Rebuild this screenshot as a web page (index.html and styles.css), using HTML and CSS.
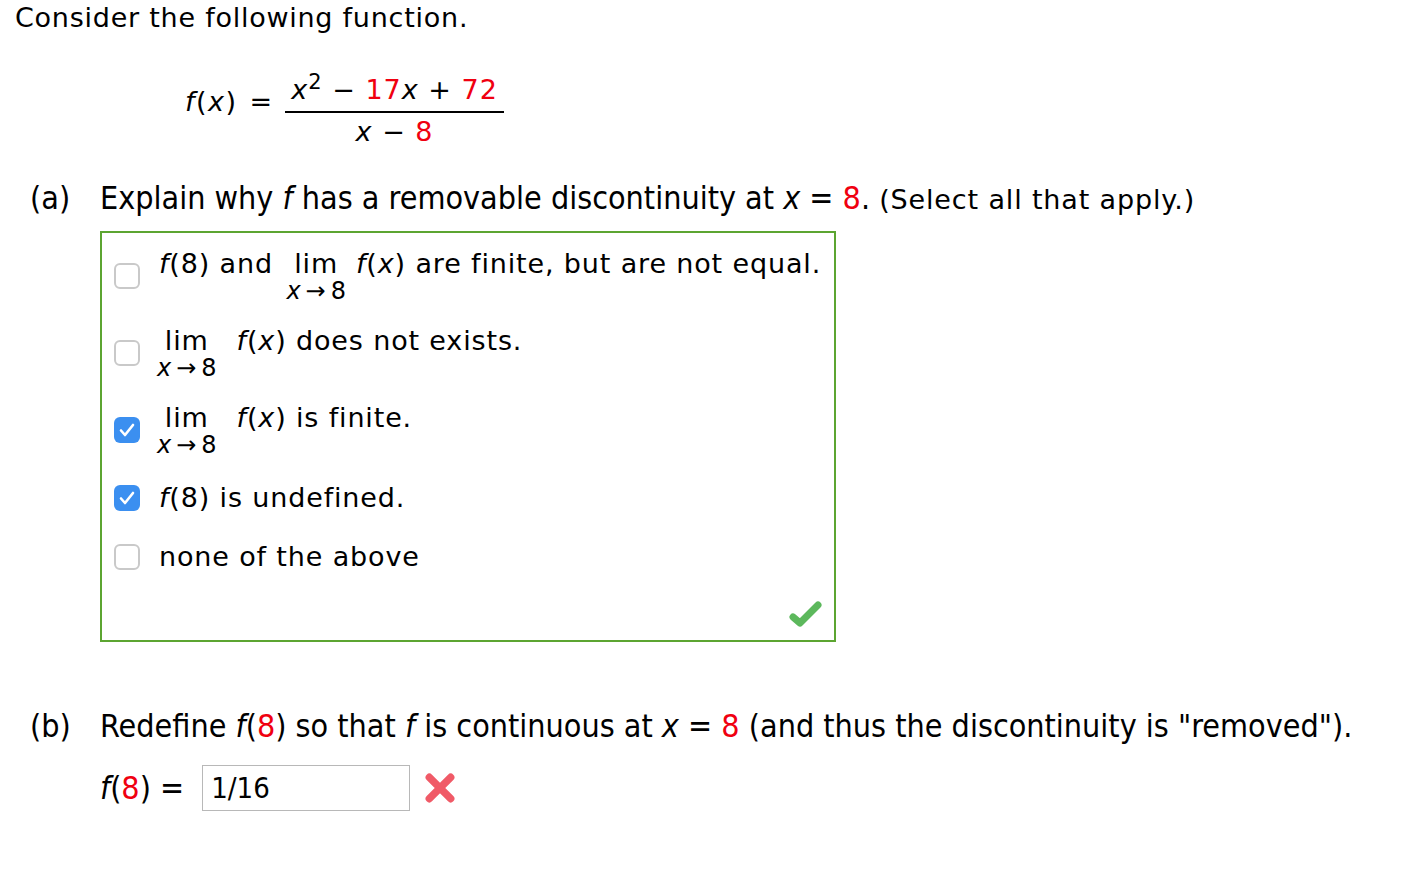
FILE: index.html
```html
<!DOCTYPE html>
<html lang="en">
<head>
    <meta charset="UTF-8">
    <link rel="stylesheet" href="styles.css">
</head>
<body>
    <div class="page">
        <p class="intro">Consider the following function.</p>

        <div class="formula">
            <span class="lhs"><i>f</i>(<i>x</i>)</span>
            <span class="eq">=</span>
            <span class="frac">
                <span class="num"><i>x</i><sup>2</sup> &minus; <span class="red">17</span><i>x</i> + <span class="red">72</span></span>
                <span class="den"><i>x</i> &minus; <span class="red">8</span></span>
            </span>
        </div>

        <div class="part">
            <div class="part-head">
                <span class="label">(a)</span>
                <span class="question">Explain why <i>f</i> has a removable discontinuity at <i>x</i> = <span class="red">8</span>. <span class="wide">(Select all that apply.)</span></span>
            </div>
            <div class="answer-box">
                <div class="option">
                    <span class="cb"></span>
                    <div class="opt-text"><i>f</i>(8) and <span class="lim"><span>lim</span><span class="sub"><i>x</i><span class="arrow">&rarr;</span>8</span></span><i>f</i>(<i>x</i>) are finite, but are not equal.</div>
                </div>
                <div class="option">
                    <span class="cb"></span>
                    <div class="opt-text"><span class="lim first"><span>lim</span><span class="sub"><i>x</i><span class="arrow">&rarr;</span>8</span></span><i>f</i>(<i>x</i>) does not exists.</div>
                </div>
                <div class="option">
                    <span class="cb checked"><svg viewBox="0 0 26 26"><path d="M7 13.5l4 4.5 8-10" /></svg></span>
                    <div class="opt-text"><span class="lim first"><span>lim</span><span class="sub"><i>x</i><span class="arrow">&rarr;</span>8</span></span><i>f</i>(<i>x</i>) is finite.</div>
                </div>
                <div class="option single">
                    <span class="cb checked"><svg viewBox="0 0 26 26"><path d="M7 13.5l4 4.5 8-10" /></svg></span>
                    <div class="opt-text"><i>f</i>(8) is undefined.</div>
                </div>
                <div class="option single">
                    <span class="cb"></span>
                    <div class="opt-text">none of the above</div>
                </div>
                <div class="mark-row">
                    <svg class="ok" viewBox="0 0 34 28">
                        <path d="M5 17l7 6L30 5" />
                    </svg>
                </div>
            </div>
        </div>

        <div class="part part-b">
            <div class="part-head">
                <span class="label">(b)</span>
                <span class="question">Redefine <i>f</i>(<span class="red">8</span>) so that <i>f</i> is continuous at <i>x</i> = <span class="red">8</span> (and thus the discontinuity is "removed").</span>
            </div>
            <div class="answer-row">
                <span class="narrow"><i>f</i>(<span class="red">8</span>) =</span>
                <span class="input">1/16</span>
                <svg class="wrong" viewBox="0 0 30 30">
                    <path d="M5 5l20 20M25 5L5 25" />
                </svg>
            </div>
        </div>
    </div>
</body>
</html>
```

FILE: styles.css
```css
body {
    margin: 0;
    background: #fff;
    color: #000;
    font-family: "DejaVu Sans", Verdana, sans-serif;
}
.page {
    padding: 2px 15px;
}
.red {
    color: #f00010;
}
.intro {
    margin: 0;
    font-size: 27px;
    letter-spacing: 0.75px;
    line-height: 32px;
}

/* formula */
.formula {
    display: flex;
    align-items: center;
    padding-left: 170px;
    margin-top: 34px;
    font-size: 27px;
    letter-spacing: 1px;
}
.formula .lhs {
    margin-bottom: 16px;
    letter-spacing: 1.5px;
}
.formula .eq {
    margin: 0 12px 16px 12px;
}
.frac {
    display: inline-flex;
    flex-direction: column;
    align-items: center;
}
.frac .num {
    padding: 4px 6px 3px;
    border-bottom: 2px solid #000;
    line-height: 36px;
}
.frac .den {
    line-height: 38px;
}
sup {
    font-size: 21px;
    line-height: 0;
}

/* parts */
.part {
    margin-top: 29px;
    padding-left: 15px;
}
.part-head {
    display: flex;
    font-family: "Liberation Sans Narrow", "DejaVu Sans Condensed", sans-serif;
    font-size: 32px;
    line-height: 36px;
}
.part-head .label {
    width: 70px;
}
.part-head .wide {
    font-family: "DejaVu Sans", Verdana, sans-serif;
    font-size: 27px;
    letter-spacing: 0.85px;
}
.answer-box {
    width: 708px;
    margin: 13px 0 0 70px;
    padding: 16px 12px 12px;
    border: 2px solid #5ca531;
    display: flex;
    flex-direction: column;
    gap: 23px;
}
.option {
    display: flex;
    align-items: center;
    font-size: 27px;
    letter-spacing: 0.75px;
}
.option.single {
    min-height: 36px;
}
.opt-text {
    margin-left: 19px;
    line-height: 30px;
    letter-spacing: 0.85px;
}
.lim {
    display: inline-flex;
    flex-direction: column;
    align-items: center;
    vertical-align: top;
    margin: 0 10px 0 4px;
}
.lim.first {
    margin: 0 20px 0 -2px;
}
.lim .sub {
    font-size: 24px;
    line-height: 24px;
    letter-spacing: 0;
}
.lim .arrow {
    margin: 0 5px;
}
.cb {
    flex: none;
    width: 22px;
    height: 22px;
    border: 2px solid #c9c9c9;
    border-radius: 6px;
    background: #fff;
}
.cb.checked {
    width: 26px;
    height: 26px;
    border: none;
    background: #3b8ff0;
}
.cb svg {
    display: block;
    width: 26px;
    height: 26px;
    fill: none;
    stroke: #fff;
    stroke-width: 2.6;
    stroke-linecap: round;
    stroke-linejoin: round;
}
.mark-row {
    display: flex;
    justify-content: flex-end;
    margin-top: 2px;
}
.ok {
    width: 34px;
    height: 28px;
    fill: none;
    stroke: #5cb85c;
    stroke-width: 7;
    stroke-linecap: round;
    stroke-linejoin: round;
}

/* part b */
.part-b {
    margin-top: 66px;
}
.answer-row {
    display: flex;
    align-items: center;
    margin: 21px 0 0 70px;
    font-family: "Liberation Sans Narrow", "DejaVu Sans Condensed", sans-serif;
    font-size: 32px;
}
.answer-row .narrow {
    margin-right: 18px;
}
.input {
    width: 198px;
    height: 44px;
    padding-left: 8px;
    border: 1px solid #b8b8b8;
    line-height: 44px;
    font-size: 29px;
}
.wrong {
    width: 32px;
    height: 32px;
    margin-left: 14px;
    fill: none;
    stroke: #f05a67;
    stroke-width: 7;
    stroke-linecap: round;
}
```
